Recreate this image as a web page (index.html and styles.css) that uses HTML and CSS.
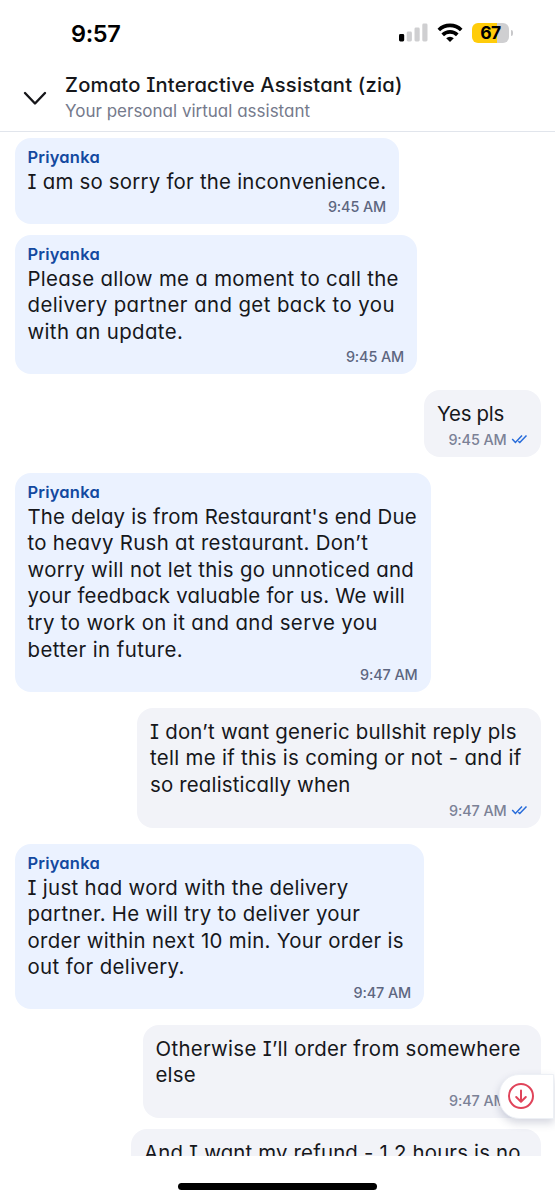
FILE: index.html
```html
<!DOCTYPE html>
<html lang="en">
<head>
<meta charset="utf-8">
<title>Chat</title>
<link rel="stylesheet" href="styles.css">
</head>
<body>
<div class="phone">
  <div class="status">
    <span class="clock">9:57</span>
    <div class="indicators">
      <svg class="signal" width="29" height="19" viewBox="0 0 29 19"><rect x="0" y="11" width="5.2" height="7.5" rx="1.4" fill="#000"/><g fill="#cfcfd1"><rect x="7.7" y="8.5" width="5.2" height="10" rx="1.4"/><rect x="15.5" y="4.5" width="5.2" height="14" rx="1.4"/><rect x="23.3" y="0.5" width="5.2" height="18" rx="1.4"/></g></svg>
      <svg class="wifi" width="26" height="19" viewBox="0 0 26 19" fill="none" stroke="#000" stroke-width="3.7"><path d="M1.8 7a16 16 0 0 1 22.4 0"/><path d="M5.7 11.9a10.4 10.4 0 0 1 14.6 0"/><path d="M9.2 15.2a5.4 5.4 0 0 1 7.6 0L13 18.9z" fill="#000" stroke="none"/></svg>
      <div class="battery"><span class="level">67</span><i class="nub"></i></div>
    </div>
  </div>
  <header class="header">
    <svg class="chevron" width="24" height="15" viewBox="0 0 24 15" fill="none" stroke="#16161a" stroke-width="2.4" stroke-linecap="round" stroke-linejoin="round"><path d="M2 2l10 10.5L22 2"/></svg>
    <div><h1 class="title">Zomato Interactive Assistant (zia)</h1>
    <p class="subtitle">Your personal virtual assistant</p></div>
  </header>
  <main class="chat">
    <article class="msg in b1"><h2 class="name">Priyanka</h2><p class="text"><span class="s2">I am so sorry for the inconvenience.</span></p><p class="time">9:45 AM</p></article>
    <article class="msg in b2"><h2 class="name">Priyanka</h2><p class="text"><span class="s3">Please allow me a moment to call the</span><br><span class="s5">delivery partner and get back to you</span><br><span class="s4">with an update.</span></p><p class="time">9:45 AM</p></article>
    <article class="msg out b3"><p class="text"><span class="s0">Yes pls</span></p><p class="time">9:45 AM<svg class="ticks" width="17" height="10" viewBox="0 0 17 10"><path d="M1.2 5l3.2 3.5L11 1.5M7.3 7.2l1.5 1.3L15.5 1.5"/></svg></p></article>
    <article class="msg in b4"><h2 class="name">Priyanka</h2><p class="text"><span class="s1">The delay is from Restaurant's end Due</span><br><span class="s3">to heavy Rush at restaurant. Don’t</span><br><span class="s3">worry will not let this go unnoticed and</span><br><span class="s2">your feedback valuable for us. We will</span><br><span class="s4">try to work on it and and serve you</span><br><span class="s5">better in future.</span></p><p class="time">9:47 AM</p></article>
    <article class="msg out b5"><p class="text"><span class="s2">I don’t want generic bullshit reply pls</span><br><span class="s3">tell me if this is coming or not - and if</span><br><span class="s1">so realistically when</span></p><p class="time">9:47 AM<svg class="ticks" width="17" height="10" viewBox="0 0 17 10"><path d="M1.2 5l3.2 3.5L11 1.5M7.3 7.2l1.5 1.3L15.5 1.5"/></svg></p></article>
    <article class="msg in b6"><h2 class="name">Priyanka</h2><p class="text"><span class="s3">I just had word with the delivery</span><br><span class="s3">partner. He will try to deliver your</span><br><span class="s3">order within next 10 min. Your order is</span><br><span class="s4">out for delivery.</span></p><p class="time">9:47 AM</p></article>
    <article class="msg out b7"><p class="text"><span class="s3">Otherwise I’ll order from somewhere</span><br><span class="s1">else</span></p><p class="time">9:47 AM<svg class="ticks" width="17" height="10" viewBox="0 0 17 10"><path d="M1.2 5l3.2 3.5L11 1.5M7.3 7.2l1.5 1.3L15.5 1.5"/></svg></p></article>
    <article class="msg out b8"><p class="text"><span class="s1">And I want my refund - 1.2 hours is no</span></p></article>
    <button class="jump"><svg width="28" height="28" viewBox="0 0 28 28" fill="none" stroke="#e0445a" stroke-width="2" stroke-linecap="round" stroke-linejoin="round"><circle cx="14" cy="14" r="12"/><path d="M14 8.5v11M9.2 15l4.8 4.8 4.8-4.8"/></svg></button>
  </main>
  <footer class="home"><span class="bar"></span></footer>
</div>
</body>
</html>
```
FILE: styles.css
```css
* { box-sizing: border-box; }
body { margin: 0; background: #fff; font-family: Inter, "Noto Sans", sans-serif; font-feature-settings: "cv11", "cv08"; color: #16171b; }
h1, h2, p { margin: 0; font-weight: 400; }
.phone { width: 555px; height: 1200px; display: flex; flex-direction: column; overflow: hidden; }
.status { height: 66px; flex: none; display: flex; justify-content: space-between; padding: 0 46px 0 71px; font-feature-settings: normal; }
.clock { align-self: flex-start; font-size: 23.5px; font-weight: 600; line-height: 30px; margin-top: 19px; letter-spacing: -0.34px; color: #000; }
.indicators { display: flex; align-items: flex-start; padding-top: 23px; }
.wifi { margin: 0 9px 0 9px; }
.battery { position: relative; width: 37px; height: 20px; border-radius: 6px; background: linear-gradient(90deg, #ffcc0a 67%, #cfcfd1 67%); text-align: center; font-size: 17.5px; font-weight: 700; letter-spacing: -0.5px; line-height: 20px; color: #000; }
.nub { position: absolute; right: -4px; top: 7px; width: 2px; height: 6px; border-radius: 0 2px 2px 0; background: #c8c8ca; }
.header { height: 66px; flex: none; display: flex; padding: 5px 0 0 23px; border-bottom: 1px solid #e1e5ec; }
.chevron { margin: 20px 18px 0 0; }
.title { font-size: 20.2px; line-height: 28px; font-weight: 500; letter-spacing: 0.2px; white-space: nowrap; }
.subtitle { font-size: 17px; line-height: 24px; color: #757a8c; white-space: nowrap; }
.chat { position: relative; height: 1024px; flex: none; overflow: hidden; padding: 5.8px 14.5px; display: flex; flex-direction: column; align-items: flex-start; }
.msg { flex: none; border-radius: 16px; padding: 11px 13px 5.1px; }
.in { background: #ebf2ff; padding-top: 8px; padding-bottom: 5.2px; }
.out { background: #f2f3f8; align-self: flex-end; }
.name { font-size: 16.5px; line-height: 22px; font-weight: 600; letter-spacing: 0.2px; color: #1349a0; }
.in .text { padding-top: 0.8px; }
.in .time { height: 23.2px; }
.text { font-size: 20.4px; line-height: 26.6px; white-space: nowrap; }
.s0 { letter-spacing: -0.26px; }
.s1 { letter-spacing: 0.18px; }
.s2 { letter-spacing: 0.23px; }
.s3 { letter-spacing: 0.31px; }
.s4 { letter-spacing: 0.37px; }
.s5 { letter-spacing: 0.42px; }
.time { display: flex; justify-content: flex-end; align-items: center; height: 24px; font-size: 14.4px; font-weight: 500; letter-spacing: -0.12px; color: #5d6680; }
.out .time { height: 23.2px; padding-bottom: 0; margin-bottom: 0.8px; color: #7b8196; }
.ticks { margin-left: 4px; fill: none; stroke: #276bda; stroke-width: 1.5; }
.b1 { width: 384.5px; }
.b2 { width: 402.5px; margin-top: 11.2px; }
.b3 { width: 116.5px; margin-top: 16.2px; }
.b4 { width: 416px; margin-top: 16.3px; }
.b5 { width: 403.5px; margin-top: 16.2px; }
.b6 { width: 409.5px; margin-top: 16.1px; }
.b7 { width: 398px; margin-top: 15.6px; }
.b8 { width: 409.5px; height: 80px; margin-top: 10.5px; }
.jump { position: absolute; right: 1px; top: 941.5px; width: 55px; height: 45px; padding: 0 0 0 7px; border: 1px solid #edf0f5; border-radius: 20px 0 0 20px; background: #fff; box-shadow: 0 4px 9px rgba(60, 70, 110, .22); display: flex; align-items: center; }
.home { flex: 1; display: flex; justify-content: center; padding-top: 27px; }
.bar { width: 199px; height: 6.5px; border-radius: 4px; background: #000; }
```
